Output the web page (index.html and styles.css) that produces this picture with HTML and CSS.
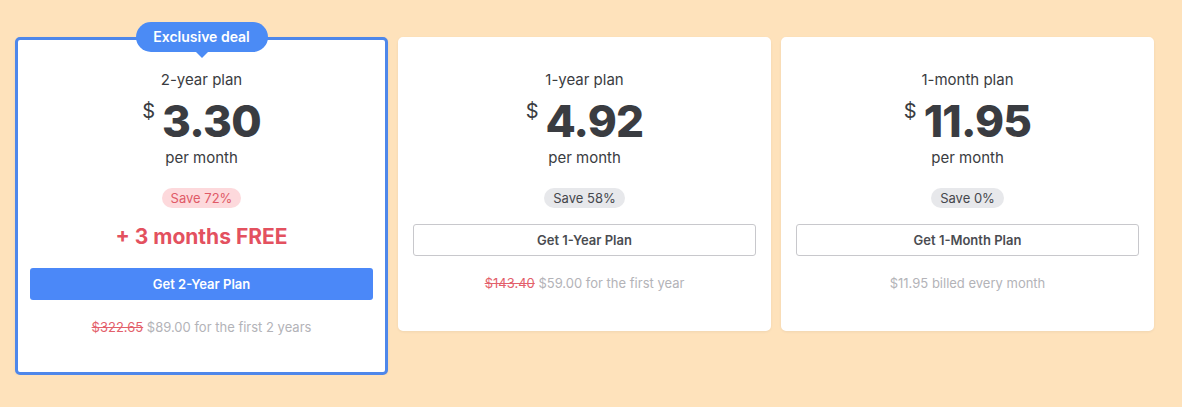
FILE: index.html
```html
<!DOCTYPE html>
<html lang="en">
<head>
    <meta charset="UTF-8">
    <meta name="viewport" content="width=device-width, initial-scale=1.0">
    <title>Plans</title>
    <link rel="stylesheet" href="styles.css">
</head>
<body>
    <section class="plans">
        <!-- Plan destacado -->
        <div class="plan featured">
            <span class="ribbon">Exclusive deal</span>
            <p class="plan-name">2-year plan</p>
            <div class="price"><span class="currency">$</span><span class="amount">3.30</span></div>
            <p class="period">per month</p>
            <span class="save hot">Save 72%</span>
            <p class="bonus">+ 3 months FREE</p>
            <button class="btn primary">Get 2-Year Plan</button>
            <p class="billing"><s>$322.65</s> $89.00 for the first 2 years</p>
        </div>

        <div class="plan">
            <p class="plan-name">1-year plan</p>
            <div class="price"><span class="currency">$</span><span class="amount">4.92</span></div>
            <p class="period">per month</p>
            <span class="save">Save 58%</span>
            <button class="btn">Get 1-Year Plan</button>
            <p class="billing"><s>$143.40</s> $59.00 for the first year</p>
        </div>

        <div class="plan">
            <p class="plan-name">1-month plan</p>
            <div class="price"><span class="currency">$</span><span class="amount">11.95</span></div>
            <p class="period">per month</p>
            <span class="save">Save 0%</span>
            <button class="btn">Get 1-Month Plan</button>
            <p class="billing">$11.95 billed every month</p>
        </div>
    </section>
</body>
</html>
```

FILE: styles.css
```css
/* General */
body {
    font-family: 'Inter', 'Noto Sans', sans-serif;
    margin: 0;
    padding: 0;
    background: #fee2bb;
    color: #3a3c41;
}

/* Rejilla de planes */
.plans {
    display: grid;
    grid-template-columns: repeat(3, 373px);
    gap: 10px;
    align-items: start;
    padding: 37px 0 0 15px;
}

.plan {
    position: relative;
    background: #fff;
    border: 3px solid #fff;
    border-radius: 5px;
    padding: 30px 12px 35px;
    display: flex;
    flex-direction: column;
    align-items: center;
    text-align: center;
    box-shadow: 0 1px 3px rgba(0, 0, 0, 0.06);
}

.plan.featured {
    border-color: #4e87ea;
}

/* Etiqueta superior */
.ribbon {
    position: absolute;
    top: -18px;
    left: 50%;
    transform: translateX(-50%);
    width: 132px;
    height: 30px;
    line-height: 30px;
    border-radius: 15px;
    background: #4b8bf5;
    color: #fff;
    font-weight: 600;
    font-size: 14px;
}

.ribbon::after {
    content: "";
    position: absolute;
    left: 50%;
    bottom: -6px;
    margin-left: -6px;
    border-left: 6px solid transparent;
    border-right: 6px solid transparent;
    border-top: 6px solid #4b8bf5;
}

.plan-name {
    margin: 0;
    font-size: 15px;
    line-height: 20px;
}

.price {
    display: flex;
    align-items: flex-start;
    gap: 7px;
    margin-top: 7px;
    height: 48px;
}

.currency {
    font-size: 20px;
    line-height: 24px;
    margin-top: 2px;
}

.amount {
    font-size: 44px;
    font-weight: 800;
    line-height: 48px;
    letter-spacing: -0.8px;
}

.period {
    margin: 3px 0 0;
    font-size: 15px;
    line-height: 20px;
}

/* Pastilla de ahorro */
.save {
    margin-top: 20px;
    height: 20px;
    line-height: 20px;
    padding: 0 9px;
    border-radius: 10px;
    background: #e7e8eb;
    font-size: 13px;
    color: #45474c;
}

.save.hot {
    background: #fdd9dc;
    color: #e05a67;
}

.bonus {
    margin: 15px 0 0;
    font-size: 21px;
    line-height: 28px;
    font-weight: 700;
    color: #e3515f;
}

/* Botones */
.btn {
    width: 100%;
    height: 32px;
    margin-top: 16px;
    border: 1px solid #c8c8cc;
    border-radius: 3px;
    background: #fff;
    color: #4a4c51;
    font-family: inherit;
    font-weight: 600;
    font-size: 13px;
    cursor: pointer;
}

.btn.primary {
    margin-top: 17px;
    border: none;
    background: #4b88f8;
    color: #fff;
}

.billing {
    margin: 17px 0 0;
    font-size: 13px;
    line-height: 20px;
    color: #b3b3b8;
}

.billing s {
    color: #e3606b;
}
```
